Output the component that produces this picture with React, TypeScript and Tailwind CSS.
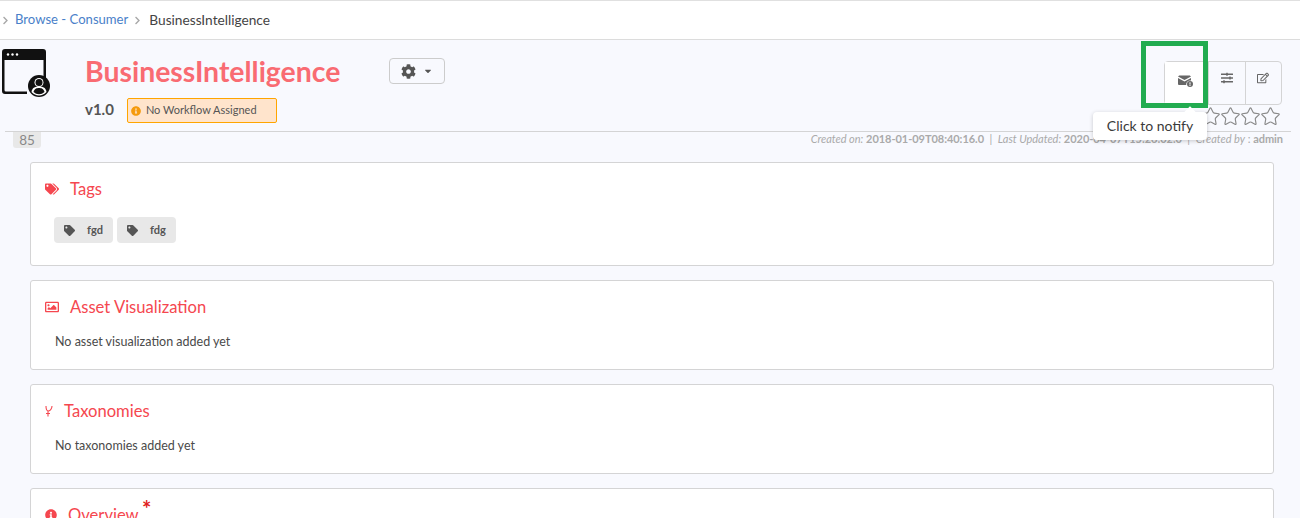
import React from 'react';
import { FaCog, FaTags, FaTag, FaRegImage, FaInfoCircle, FaSlidersH, FaRegEdit, FaCaretDown, FaChevronRight } from 'react-icons/fa';
import { Star } from 'lucide-react';

const Card: React.FC<{ title: string; icon: React.ReactNode; gap?: string; children?: React.ReactNode; className?: string }> = ({ title, icon, gap = 'gap-[11px]', children, className = '' }) => (
  <section className={`mr-[26px] mb-[14px] ml-[30px] shrink-0 rounded-[3px] border border-[#d4d4d5] bg-white px-[14px] ${className}`}>
    <h3 className={`flex items-center text-[16.600px] leading-[20px] font-normal text-[#f5474f] ${gap}`}>
      {icon}
      <span>{title}</span>
    </h3>
    {children}
  </section>
);

const TagChip: React.FC<{ label: string }> = ({ label }) => (
  <span className="flex h-[26px] items-center gap-[12px] rounded-[4px] bg-[#e8e8e8] px-[10px] text-[11px] font-bold text-[#555]">
    <FaTag size={11} className="text-[#555]" />
    {label}
  </span>
);

const App: React.FC = () => {
  return (
    <div className="relative h-[518px] w-[1300px] overflow-hidden bg-[#f8f9fe] font-['Lato','Liberation_Sans',sans-serif] text-[#4a4a4a]">
      {/* Breadcrumb */}
      <nav className="flex h-[40px] items-center border-t border-b border-t-[#e0e0e0] border-b-[#dcdcdc] bg-white pl-[1px]">
        <FaChevronRight size={9} className="mr-[5px] text-[#a8a8a8]" />
        <a className="text-[13.100px] text-[#4a7fc9]">Browse - Consumer</a>
        <FaChevronRight size={9} className="mr-[7px] ml-[5px] text-[#a8a8a8]" />
        <span className="text-[13.700px] text-[#444]">BusinessIntelligence</span>
      </nav>

      {/* Asset header */}
      <header className="relative h-[91px]">
        <div className="flex items-start pl-[2px]">
          <svg width="48" height="48" viewBox="0 0 48 48" className="mt-[9px] shrink-0">
            <path d="M2 0h39a3 3 0 0 1 3 3v26h-2.500V11H2.500v30a1.500 1.500 0 0 0 1.500 1.500h21V45H3a3 3 0 0 1-3-3V3a3 3 0 0 1 3-3z" fill="#111" />
            <circle cx="6" cy="5.500" r="1.200" fill="#fff" />
            <circle cx="10.500" cy="5.500" r="1.200" fill="#fff" />
            <circle cx="15" cy="5.500" r="1.200" fill="#fff" />
            <circle cx="37" cy="37" r="11" fill="#111" />
            <circle cx="37" cy="33.500" r="4.500" fill="#fff" />
            <path d="M29.500 43c1-5 4-5.500 7.500-5.500s6.500 .5 7.500 5.500a10 10 0 0 1-15 0z" fill="#fff" />
            <circle cx="37" cy="33.500" r="3.500" fill="#111" />
            <path d="M31.500 43c1-3.500 3-4 5.500-4s4.500 .5 5.500 4a8 8 0 0 1-11 0z" fill="#111" />
          </svg>
          <div className="ml-[35px] pt-[11px]">
            <div className="flex items-start">
              <h1 className="text-[28.400px] leading-[40px] font-bold text-[#f96b72]">BusinessIntelligence</h1>
              <button className="mt-[7px] ml-[49px] flex h-[26px] w-[56px] items-center justify-center gap-[7px] rounded-[4px] border border-[#ccc] bg-[#f8f9fe] text-[#555]">
                <FaCog size={15} />
                <FaCaretDown size={10} />
              </button>
            </div>
            <div className="mt-[7px] flex items-center gap-[13px]">
              <span className="-mt-[2px] text-[15px] font-bold text-[#555]">v1.0</span>
              <span className="flex h-[25px] w-[150px] items-center gap-[5px] rounded-[2px] border border-[#ffa500] bg-[#ffe4cc] pl-[3px] text-[11px] text-[#555]">
                <FaInfoCircle size={10} className="text-[#f59a0c]" />
                No Workflow Assigned
              </span>
            </div>
          </div>
        </div>

        {/* Action buttons and rating */}
        <div className="absolute top-[21px] right-[18px] flex flex-col items-end">
          <div className="flex h-[44px] w-[118px] rounded-[4px] border border-[#d4d4d5] text-[#666]">
            <span className="flex w-[44px] items-center justify-center border-r border-[#d4d4d5] bg-white pr-[2px] pb-[5px]">
              <svg width="15" height="14" viewBox="0 0 15 14" fill="#666">
                <path d="M0 2.500 1.200 1.500h10.600L13 2.500 6.500 6z" />
                <path d="M0 4 6.500 7.500 13 4v2.600a4 4 0 0 0-4.800 4.400H1a1 1 0 0 1-1-1z" />
                <circle cx="12" cy="10" r="3" />
                <rect x="11.500" y="8.300" width="1" height="2.300" fill="#fff" />
                <rect x="11.500" y="11" width="1" height="1" fill="#fff" />
              </svg>
            </span>
            <span className="flex w-[37px] items-center justify-center border-r border-[#d4d4d5] pb-[10px]">
              <FaSlidersH size={12} />
            </span>
            <span className="flex flex-1 items-center justify-center pr-[2px] pb-[10px]">
              <FaRegEdit size={12} />
            </span>
          </div>
          <div className="mt-[1px] mr-[1px] flex text-[#8a8a8a]">
            <Star size={21} strokeWidth={1.300} className="-ml-[1px]" />
            <Star size={21} strokeWidth={1.300} className="-ml-[1px]" />
            <Star size={21} strokeWidth={1.300} className="-ml-[1px]" />
            <Star size={21} strokeWidth={1.300} className="-ml-[1px]" />
          </div>
        </div>
      </header>

      {/* Meta row */}
      <div className="mx-[5px] flex h-[31px] w-[1286px] items-start justify-between border-t border-[#d4d4d5]">
        <span className="ml-[8px] flex h-[16px] w-[28px] items-center justify-center rounded-b-[3px] bg-[#e8e8e8] text-[13.500px] text-[#888]">85</span>
        <p className="mr-[8px] text-[11px] leading-[14px] tracking-[-0.04px] text-[#aaa]">
          <i>Created on:</i> <b>2018-01-09T08:40:16.0</b>&nbsp; | &nbsp;<i>Last Updated:</i> <b>2020-04-07T15:26:02.0</b>&nbsp; | &nbsp;<i>Created by</i> : <b>admin</b>
        </p>
      </div>

      {/* Sections */}
      <div className="flex flex-col">
        <Card title="Tags" icon={<FaTags size={14} />} className="h-[104px] pt-[16px]">
          <div className="mt-[18px] ml-[9px] flex gap-[4px]">
            <TagChip label="fgd" />
            <TagChip label="fdg" />
          </div>
        </Card>
        <Card title="Asset Visualization" icon={<FaRegImage size={14} />} className="h-[90px] pt-[16px]">
          <p className="mt-[17px] ml-[10px] text-[12.500px] leading-[16px] text-[#4a4a4a]">No asset visualization added yet</p>
        </Card>
        <Card
          title="Taxonomies"
          icon={
            <svg width="8" height="12" viewBox="0 0 8 12" fill="none" stroke="#f5474f" strokeWidth="1.100">
              <path d="M1 1c0 3 .5 5 2.500 5S7 3 7 1M3 6v5.500M1 8.500h4" />
            </svg>
          }
          className="h-[90px] pt-[16px]"
        >
          <p className="mt-[17px] ml-[10px] text-[12.500px] leading-[16px] text-[#4a4a4a]">No taxonomies added yet</p>
        </Card>
        <Card title="Overview" icon={<FaInfoCircle size={12} />} className="h-[90px] pt-[16px]" />
      </div>
      <span className="absolute top-[499px] left-[142px] text-[22px] leading-[20px] font-bold text-[#e02020]">*</span>

      {/* Highlight box drawn over the notify button */}
      <div className="pointer-events-none absolute top-[41px] left-[1141px] h-[67px] w-[67px] border-[5px] border-[#22ac50]" />

      {/* Tooltip */}
      <div className="absolute top-[112px] left-[1093px] flex h-[28px] w-[114px] items-center justify-center rounded-[4px] bg-white pb-[2px] text-[14px] text-[#3a3a3a] shadow-[0_1px_4px_rgba(0,0,0,0.2)]">
        <span className="absolute -top-[4px] left-[93px] h-[8px] w-[8px] rotate-45 bg-white" />
        <span className="relative">Click to notify</span>
      </div>
    </div>
  );
};

export default App;
